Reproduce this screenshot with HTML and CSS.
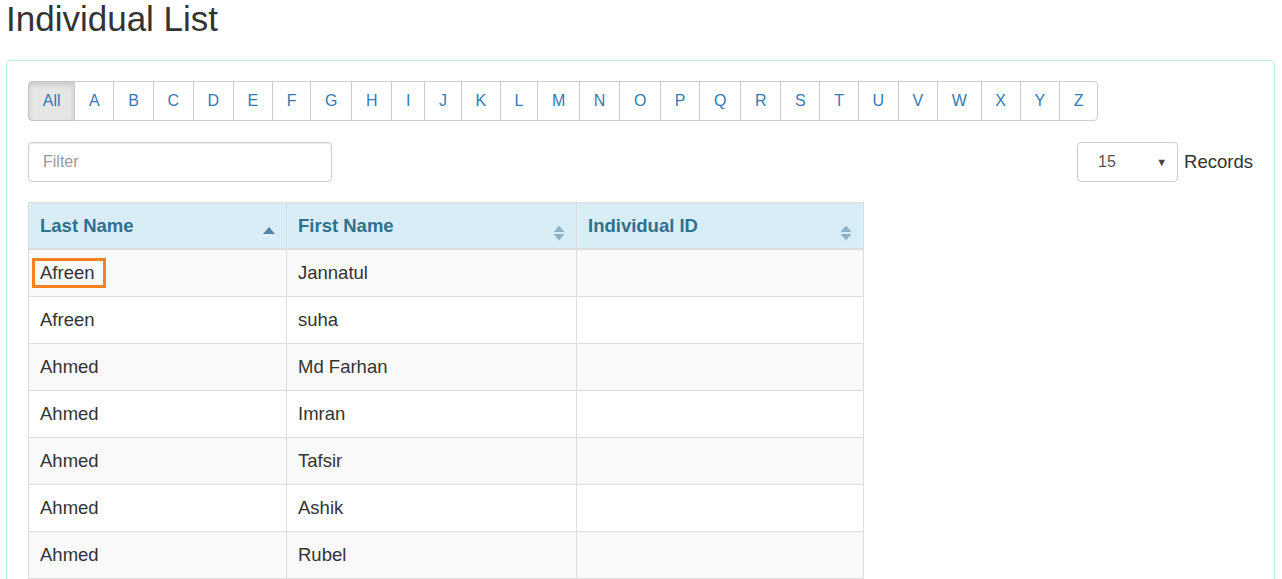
FILE: index.html
```html
<!DOCTYPE html>
<html>
<head>
<meta charset="utf-8">
<link rel="stylesheet" href="styles.css">
</head>
<body>
<div class="page">
  <h1 class="title">Individual List</h1>
  <div class="panel">
    <ul class="letters">
      <li class="active">All</li><li>A</li><li>B</li><li>C</li><li>D</li><li>E</li><li>F</li><li>G</li><li>H</li><li>I</li><li>J</li><li>K</li><li>L</li><li>M</li><li>N</li><li>O</li><li>P</li><li>Q</li><li>R</li><li>S</li><li>T</li><li>U</li><li>V</li><li>W</li><li>X</li><li>Y</li><li>Z</li>
    </ul>
    <div class="toolbar">
      <input class="filter" type="text" placeholder="Filter">
      <div class="records">
        <div class="select"><span>15</span><span class="caret">▼</span></div>
        <span class="records-label">Records</span>
      </div>
    </div>
    <table class="grid">
      <colgroup><col class="c1"><col class="c2"><col class="c3"></colgroup>
      <thead>
        <tr>
          <th><span>Last Name</span>
            <svg class="sort" width="12" height="20" viewBox="0 0 12 20"><path d="M0 11 L6 4 L12 11 Z" fill="#4e87a9"/></svg>
          </th>
          <th><span>First Name</span>
            <svg class="sort" width="12" height="20" viewBox="0 0 12 20"><path d="M0.5 9 L6 2.5 L11.5 9 Z M0.5 11 L11.5 11 L6 17.5 Z" fill="#8eb3c9"/></svg>
          </th>
          <th><span>Individual ID</span>
            <svg class="sort" width="12" height="20" viewBox="0 0 12 20"><path d="M0.5 9 L6 2.5 L11.5 9 Z M0.5 11 L11.5 11 L6 17.5 Z" fill="#8eb3c9"/></svg>
          </th>
        </tr>
      </thead>
      <tbody>
        <tr><td><span class="hl">Afreen</span></td><td>Jannatul</td><td></td></tr>
        <tr><td>Afreen</td><td>suha</td><td></td></tr>
        <tr><td>Ahmed</td><td>Md Farhan</td><td></td></tr>
        <tr><td>Ahmed</td><td>Imran</td><td></td></tr>
        <tr><td>Ahmed</td><td>Tafsir</td><td></td></tr>
        <tr><td>Ahmed</td><td>Ashik</td><td></td></tr>
        <tr><td>Ahmed</td><td>Rubel</td><td></td></tr>
        <tr><td>Ahmed</td><td>Sabbir</td><td></td></tr>
      </tbody>
    </table>
  </div>
</div>
</body>
</html>
```
FILE: styles.css
```css
html, body {
  margin: 0;
  padding: 0;
  background: #fff;
  font-family: "Liberation Sans", Arial, sans-serif;
  color: #333;
  overflow: hidden;
}
.page {
  padding: 0 7px 0 6px;
}
.title {
  margin: -1px 0 21px 0;
  font-size: 35px;
  line-height: 40px;
  height: 40px;
  font-weight: normal;
  color: #333;
}
.panel {
  border: 1px solid #bce8f1;
  border-radius: 4px;
  padding: 20px 21px 0 21px;
  height: 700px;
}
.letters {
  display: flex;
  list-style: none;
  margin: 0;
  padding: 0;
}
.letters li {
  font-size: 16px;
  line-height: 38px;
  height: 38px;
  padding: 0 13.75px;
  color: #337ab7;
  border: 1px solid #ccc;
  margin-left: -1px;
  background: #fff;
}
.letters li:first-child {
  margin-left: 0;
  border-radius: 4px 0 0 4px;
}
.letters li:last-child {
  border-radius: 0 4px 4px 0;
}
.letters li.active {
  background: #e6e6e6;
  border-color: #c4c4c4;
  box-shadow: inset 0 3px 5px rgba(0,0,0,0.125);
}
.toolbar {
  display: flex;
  justify-content: space-between;
  align-items: center;
  margin-top: 21px;
}
.filter {
  box-sizing: border-box;
  width: 304px;
  height: 40px;
  border: 1px solid #ccc;
  border-radius: 4px;
  padding: 0 14px;
  font-family: "Liberation Sans", Arial, sans-serif;
  font-size: 16px;
  color: #555;
  box-shadow: inset 0 1px 1px rgba(0,0,0,0.075);
  outline: none;
}
.filter::placeholder {
  color: #999;
}
.records {
  display: flex;
  align-items: center;
}
.select {
  box-sizing: border-box;
  width: 101px;
  height: 40px;
  border: 1px solid #ccc;
  border-radius: 4px;
  display: flex;
  align-items: center;
  justify-content: space-between;
  padding: 0 10px 0 20px;
  font-size: 16px;
  color: #555;
}
.caret {
  font-size: 11px;
  color: #444;
}
.records-label {
  font-size: 18.5px;
  margin-left: 6px;
  color: #333;
}
.grid {
  margin-top: 20px;
  border-collapse: collapse;
  width: 835px;
  table-layout: fixed;
  font-size: 18.5px;
}
.c1 { width: 258px; }
.c2 { width: 290px; }
.c3 { width: 287px; }
.grid th, .grid td {
  border: 1px solid #ddd;
  text-align: left;
  vertical-align: top;
}
.grid th {
  background: #d9edf7;
  color: #31708f;
  font-weight: bold;
  padding: 11px 11px 10px 11px;
  line-height: 24px;
  border-bottom: 2px solid #ddd;
  position: relative;
}
.grid th .sort {
  position: absolute;
  right: 11px;
  top: 20px;
}
.grid td {
  padding: 11px 11px;
  line-height: 24px;
  height: 24px;
}
.grid tbody tr:nth-child(odd) td {
  background: #f9f9f9;
}
.hl {
  display: inline-block;
  border: 3px solid #f5821f;
  margin: -3px 0 -3px -8px;
  padding: 0 8px 0 5px;
  line-height: 24px;
}
```
